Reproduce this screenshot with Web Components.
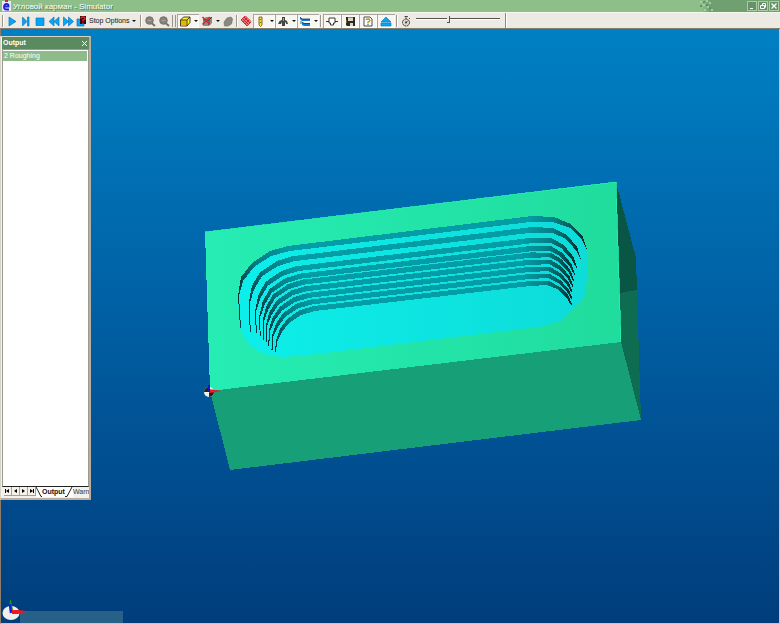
<!DOCTYPE html>
<html lang="en">
<head>
<meta charset="utf-8">
<title>Simulator</title>
<style>
html,body{margin:0;height:100%}
body{font:7px/10px "Liberation Sans",Arial,sans-serif;color:#111;overflow:hidden}
</style>
</head>
<body>
<sim-window></sim-window>
<script>
const define = (name, html, setup) => customElements.define(name, class extends HTMLElement {
  connectedCallback() {
    if (this.shadowRoot) return;
    const t = document.createElement('template');
    t.innerHTML = html;
    this.attachShadow({mode: 'open'}).append(t.content.cloneNode(true));
    if (setup) setup(this, this.shadowRoot);
  }
});

/* 12 x 12 glyphs for the toolbar */
const blue = 'fill="#08a5f4" stroke="#0878c4" stroke-width=".7"';
const ICONS = {
  play: `<path ${blue} d="M3 2L10 6.500L3 11Z"/>`,
  step: `<path ${blue} d="M2.500 2L7 6.500L2.500 11ZM7.500 2H9V11H7.500Z"/>`,
  stop: `<path ${blue} d="M2 3H10V10.500H2Z"/>`,
  back: `<path ${blue} d="M6 2V11L1 6.500ZM11 2V11L6 6.500Z"/>`,
  forward: `<path ${blue} d="M1.500 2L6.500 6.500L1.500 11ZM6.500 2L11.500 6.500L6.500 11Z"/>`,
  ask: `<path ${blue} d="M1 4H8V11H1Z"/><path fill="#320b12" d="M4 1H10V9H4Z"/><path fill="none" stroke="#f01c20" stroke-width="1.500" d="M5 3.500Q5 2 7 2Q9 2 9 3.500Q9 4.500 7 5V6.500M7 7.500V9"/>`,
  zoom: `<path stroke="#77716a" stroke-width="2" d="M7.500 8L11 11"/><circle cx="5.500" cy="5.500" r="3.800" fill="#85817b" stroke="#77726c"/><path stroke="#aaa69f" d="M3.500 5.500H7.500"/>`,
  cube: `<path fill="#ffed2d" stroke="#261d00" stroke-width=".8" d="M1.500 5L4.500 2H11V7.500L8 11H1.500Z"/><path fill="#e8b600" d="M2 5.500H7.500V10.500H2Z"/><path fill="none" stroke="#261d00" stroke-width=".8" d="M1.500 5H8L11 2M8 5V11"/>`,
  cross: `<path fill="#8f8c86" d="M2 4L5 2H11V8L8 11H2Z"/><path stroke="#333" stroke-width=".8" d="M2 5H8L11 2M8 5V10"/><path stroke="#df242a" stroke-width="1.600" d="M1.500 2L9 9.500M9 2L1.500 9.500"/>`,
  blob: `<path fill="#8b8781" stroke="#77736e" stroke-width=".7" d="M2 7L5 3L9 2L10.500 4L9.500 9L6 11H2.500Z"/>`,
  mesh: `<path fill="#e07874" d="M1 5L5 1L11 7L7 11Z"/><path stroke="#c72330" stroke-width=".9" d="M1 5L7 11M2.500 3.500L8.500 9.500M4 2L10 8M5.500 1L11 6.500M5 1L1 5M7 3L3 7M9 5L5 9M11 7L7 11"/>`,
  tool: `<path fill="#ffe735" stroke="#684b00" stroke-width=".8" d="M4 2H7V10L5.500 11.500L4 10Z"/><path stroke="#8d6900" d="M4.500 5L6.500 4M4.500 8L6.500 7"/>`,
  holder: `<path fill="#424741" d="M5 2H8V5L10 6L11 9H9V8L8 7V11H5V7L4 9H1L2.500 6L5 5Z"/><path stroke="#97a59b" d="M6.500 3V6"/>`,
  path: `<path fill="#137bd5" d="M1 2L3 4H11V6H3L1 4ZM3 7L5 8H11V11H5L3 10Z"/><path fill="none" stroke="#173a5b" stroke-width=".8" d="M1 2L3 4H11M3 7L5 8.500H11M2 6V9"/>`,
  plug: `<path fill="#fff" stroke="#222" stroke-width=".9" d="M0 6.500H3V3H9V6.500H12M9 6.500V8H7.500V10H4.500V8H3V6.500"/>`,
  save: `<path fill="#2a2926" d="M2 2H11V11H3L2 10Z"/><path fill="#d9d6cb" d="M4 2.500H9V6H4ZM6 8H9V11H6Z"/><path fill="#7e642b" d="M2 5H3V8H2Z"/>`,
  help: `<path fill="#fff" stroke="#222" stroke-width=".8" d="M2 2H8L10 4V11H2Z"/><path fill="none" stroke="#b29300" stroke-width="1.300" d="M4 5Q4 4 6 4Q8 4 8 5.500Q8 6.500 6 7V8.500"/><path stroke="#3052a2" d="M6 9V10.500"/>`,
  eject: `<path ${blue} d="M6 2L11 7H1ZM1 8H11V11H1Z"/>`,
  gauge: `<circle cx="6" cy="7.500" r="3.500" fill="#dcd8cd" stroke="#37342f" stroke-dasharray="2 .5"/><circle cx="6" cy="7.500" r="1" fill="#37342f"/><path fill="none" stroke="#37342f" stroke-width=".8" d="M6 1V4M4.500 1.500H8M9 4L10 3M6 7.500L8 5.500"/>`
};

define('tool-icon', `<style>:host{display:block;width:12px;height:12px;flex:none}svg{display:block}</style><svg viewBox="0 0 12 12" width="12" height="12" fill="none" aria-hidden="true"></svg>`,
  (el, root) => { root.querySelector('svg').innerHTML = ICONS[el.getAttribute('name')]; });

define('tool-button', `<style>
:host{display:block;flex:none;width:14px;height:14px}
:host([wide]){width:18px}:host([menu]){width:22px}:host([labelled]){width:64px}
button{all:unset;box-sizing:border-box;display:flex;align-items:center;justify-content:center;width:100%;height:14px;white-space:nowrap;gap:1px}
:host([menu]) button{gap:3px}
:host([labelled]) button{justify-content:flex-start;padding-left:1px}
:host([on]) button{background:#f7f6f1;box-shadow:inset 1px 1px #aaa69b,inset -1px -1px #fff}
i{display:none;border:2px solid transparent;border-top-color:#111;border-bottom:0}
:host([menu]) i,:host([labelled]) i{display:block}
:host([labelled]) i{margin-left:2px}
</style><button type="button"><tool-icon></tool-icon><slot></slot><i></i></button>`,
  (el, root) => {
    root.querySelector('button').setAttribute('aria-label', el.getAttribute('label'));
    const icon = document.createElement('tool-icon');
    icon.setAttribute('name', el.getAttribute('icon'));
    root.querySelector('tool-icon').replaceWith(icon);
  });

define('tool-sep', `<style>:host{display:block;flex:none;width:4px;height:12px;background:linear-gradient(#9b968a,#9b968a) 1px 0/1px 100% no-repeat,linear-gradient(#fff,#fff) 2px 0/1px 100% no-repeat}
:host([double]){width:6px;background:linear-gradient(#9b968a,#9b968a) 1px 0/1px 100% no-repeat,linear-gradient(#9b968a,#9b968a) 4px 0/1px 100% no-repeat}</style>`);

define('tool-bar', `<style>
:host{display:flex;height:16px;background:#eceae3;border-bottom:1px solid #827d70;box-sizing:border-box}
.band{display:flex;align-items:center;padding-left:1px;border-right:1px solid #8f8a7f;box-shadow:1px 0 #fff}
input{appearance:none;width:84px;height:12px;margin:0 5px 3px 3px;background:linear-gradient(#55534d,#55534d) 0 5px/100% 1px no-repeat,linear-gradient(#fff,#fff) 0 6px/100% 1px no-repeat;outline:0}
input::-webkit-slider-thumb{appearance:none;width:3px;height:7px;background:#eceae3;border:solid #55534d;border-width:0 1px 1px 0;box-sizing:border-box}
</style><div class="band"><tool-sep></tool-sep>
<tool-button icon="play" label="Play"></tool-button><tool-button icon="step" label="Step"></tool-button><tool-button icon="stop" label="Stop"></tool-button><tool-button icon="back" label="Rewind"></tool-button><tool-button icon="forward" label="Fast forward"></tool-button>
<tool-button icon="ask" label="Stop Options" labelled>Stop Options</tool-button><tool-sep></tool-sep>
<tool-button icon="zoom" label="Zoom in"></tool-button><tool-button icon="zoom" label="Zoom out"></tool-button><tool-sep double></tool-sep>
<tool-button icon="cube" label="Stock" menu on></tool-button><tool-button icon="cross" label="Hide" menu></tool-button><tool-button icon="blob" label="Part"></tool-button><tool-sep></tool-sep>
<tool-button icon="mesh" label="Mesh"></tool-button><tool-button icon="tool" label="Tool" menu on></tool-button><tool-button icon="holder" label="Holder" menu on></tool-button><tool-button icon="path" label="Path" menu on></tool-button><tool-sep></tool-sep>
<tool-button icon="plug" label="Connect" wide on></tool-button><tool-button icon="save" label="Save" wide on></tool-button><tool-button icon="help" label="Help" wide on></tool-button><tool-button icon="eject" label="Eject" wide on></tool-button><tool-sep></tool-sep>
<tool-button icon="gauge" label="Speed"></tool-button><input type="range" aria-label="Simulation speed" min="0" max="100" value="38"></div>`);

define('title-bar', `<style>
:host{display:flex;align-items:center;height:13px;padding:0 1px 0 2px;box-sizing:border-box;color:#fff;font-size:8px;background:linear-gradient(90deg,#8fbf89 0 90%,#70a070 91%);border-bottom:1px solid #f5f8ef}
.logo{margin-right:2px;flex:none}span{flex:1;padding-top:1px;text-shadow:1px 1px #557d55}
.pix{flex:none;margin-right:29px}
button{all:unset;box-sizing:border-box;width:10px;height:10px;border:1px solid #a9cda3;margin-left:1px;background:#669267}
button svg{display:block}
</style><svg class="logo" width="9" height="12" viewBox="0 0 9 12"><path fill="#e8eafb" d="M0 1H9V11H0Z"/><path fill="#e01f31" d="M3 0H6V2H3Z"/><path fill="none" stroke="#2222d4" stroke-width="1.800" d="M2 6.500H6.500Q7 4 4.500 4Q2 4 2 7Q2 9.500 4.500 9.500H7"/></svg><span>Угловой карман - Simulator</span>
<svg class="pix" width="18" height="12" viewBox="0 0 18 12"><path fill="#8fbf89" d="M0 0H4V12H2V8H0Z"/><path fill="#a3cda0" d="M1 1H3V3H1ZM7 0H9V2H7ZM4 4H6V6H4ZM10 2H12V4H10ZM8 6H10V8H8ZM5 9H7V11H5ZM12 9H14V11H12Z"/><path fill="#638f64" d="M4 1H6V3H4ZM1 5H3V7H1ZM7 4H9V6H7ZM10 7H12V9H10Z"/></svg>
<button aria-label="Minimize"><svg width="8" height="8"><path stroke="#fff" stroke-width="1" d="M2 6.500H5"/></svg></button><button aria-label="Restore"><svg width="8" height="8"><path fill="none" stroke="#fff" d="M1.500 3.500H5.500V6.500H1.500ZM3.500 3V1.500H6.500V5.500"/></svg></button><button aria-label="Close"><svg width="8" height="8"><path stroke="#fff" stroke-width="1.400" d="M1.500 1.500L6.500 6.500M6.500 1.500L1.500 6.500"/></svg></button>`);

define('output-panel', `<style>
:host{display:flex;flex-direction:column;box-sizing:border-box;background:#f3f1e9;border:1px solid #d8d5c8;border-right:2px solid #b8ada0;border-bottom:2px solid #b8ada0;padding:0 0 1px 1px}
header{display:flex;align-items:center;justify-content:space-between;height:12px;flex:none;background:#5b8a60;color:#fff;font-weight:bold;padding:0 1px 0 1px}
header button{all:unset;width:7px;height:7px}header svg,nav svg{display:block}
ul{flex:1;list-style:none;margin:0;padding:1px 1px 1px 0;background:#fff;border:1px solid #999b91;border-bottom-color:#222}
li{background:#8fba8a;color:#fff;padding-left:1px;height:10px}
nav{display:flex;height:10px;flex:none;overflow:hidden;padding-left:2px}
nav button{all:unset;box-sizing:border-box;flex:none;width:8px;height:9px;border:solid #a5a197;border-width:0 1px 1px 0;background:#f5f3ec}
nav .tab{width:auto;height:10px;border:0;display:flex;background:none;color:#333}
nav .tab.on{color:#111;background:#fff;font-weight:bold}
</style><header>Output<button aria-label="Close"><svg width="7" height="7"><path stroke="#fff" d="M1 1L6 6M6 1L1 6"/></svg></button></header>
<ul><li>2 Roughing</li></ul>
<nav><button aria-label="First"><svg width="7" height="8"><path d="M1 2H2V6H1ZM5 2V6L2 4Z"/></svg></button><button aria-label="Previous"><svg width="7" height="8"><path d="M5 2V6L2 4Z"/></svg></button><button aria-label="Next"><svg width="7" height="8"><path d="M2 2V6L5 4Z"/></svg></button><button aria-label="Last"><svg width="7" height="8"><path d="M2 2V6L5 4ZM5 2H6V6H5Z"/></svg></button><button class="tab on"><svg width="6" height="10"><path fill="none" stroke="#222" d="M0 0L5 9.500H6"/></svg>Output<svg width="8" height="10"><path fill="none" stroke="#222" d="M0 9.500H2L7 0"/></svg></button><button class="tab">Warn</button></nav>`);

/* Milled block: nested pocket terraces blend from the top rim to the floor */
define('stock-scene', `<style>:host{display:block}svg{display:block;width:100%;height:100%}</style>
<svg viewBox="1 29 778 594" preserveAspectRatio="xMidYMid slice" shape-rendering="crispEdges" role="img" aria-label="Milled block with stepped pocket">
<defs><linearGradient id="sky" x2="0" y2="1"><stop stop-color="#0080c4"/><stop offset=".5" stop-color="#005ea2"/><stop offset="1" stop-color="#003d7c"/></linearGradient>
<linearGradient id="top"><stop stop-color="#26edb4"/><stop offset="1" stop-color="#20dc9d"/></linearGradient>
<linearGradient id="floor"><stop stop-color="#0deeea"/><stop offset="1" stop-color="#0ddcd9"/></linearGradient>
<linearGradient id="wall"><stop stop-color="#042d34"/><stop offset=".012" stop-color="#064d56"/><stop offset=".05" stop-color="#047b84"/><stop offset=".15" stop-color="#049da6"/><stop offset=".83" stop-color="#049da6"/><stop offset=".91" stop-color="#077f86"/><stop offset=".96" stop-color="#065558"/><stop offset="1" stop-color="#022326"/></linearGradient></defs>
<path fill="url(#sky)" d="M-800 29H1600V624H-800Z"/>
<path fill="#095645" d="M616 182L636 258L641 420L621 342Z"/><path fill="#0e6c51" d="M620 293L637 290L641 420L621 342Z"/>
<path fill="#17a077" d="M210 391L621 342L641 420L230 470Z"/>
<path fill="url(#top)" d="M205 232L616 182L621 342L210 391Z"/>
<path fill="none" stroke="#25f0ae" stroke-width=".8" d="M205 232L616 182L621 342"/>
<path fill="url(#floor)" d="M240 327L238 300L241 278L252 263L270 251L288 246L532 216L554 217L571 224L583 237L587 250V280L584 298L573 310L560 321L545 326L530 328L300 356L280 357L265 354L250 346L241 331Z"/>
<g id="steps" fill="url(#wall)"/>
<g shape-rendering="auto"><circle cx="209" cy="392" r="5" fill="#f4f4ee"/><path fill="#29201e" d="M209 392V387A5 5 0 0 0 204 392ZM209 392V397A5 5 0 0 0 214 392Z"/><path fill="#f21b20" d="M209 389L222 391L209 393Z"/><path stroke="#0b13c8" stroke-width="2" d="M209 392V385"/></g>
</svg>`, (el, root) => {
  const o1 = [[240,328],[238,296],[241,277],[252,263],[270,251],[288,246],[532,216],[554,217],[571,224],[583,237],[587,250]];
  const i1 = [[241,328],[239,296],[243,281],[254,267],[271,256],[290,251],[530,222],[553,222],[570,228],[582,240],[587,250]];
  const o9 = [[275,352],[276,340],[280,329],[287,319],[300,310],[314,306],[530,281],[549,281],[560,287],[568,295],[572,304]];
  const i9 = [[276,352],[277,342],[282,332],[289,323],[301,315],[315,311],[530,286],[547,285],[557,289],[566,297],[571,305]];
  const mid = [0,.17,.335,.46,.56,.67,.78,.89,1], left = [0,.28,.45,.56,.65,.73,.81,.9,1];
  const foot = [0,.17,.22,.32,.5,.6,.77,.9,1], right = [0,.4,.65,.78,.86,.91,.95,.98,1];
  const mix = (a, b, k) => a.map((p, n) => {
    const tx = n < 3 ? left[k] : n < 5 ? (left[k] + mid[k]) / 2 : n < 8 ? mid[k] : right[k], ty = n < 1 ? foot[k] : mid[k];
    return [p[0] + (b[n][0] - p[0]) * tx, p[1] + (b[n][1] - p[1]) * ty].join(' ');
  });
  root.querySelector('#steps').innerHTML = mid.map((_, k) => `<path d="M${mix(o1, o9, k).join('L')}L${mix(i1, i9, k).reverse().join('L')}Z"/>`).join('');
});

define('axis-strip', `<style>:host{display:flex;align-items:flex-end}svg{display:block;position:relative;z-index:1}div{width:103px;height:12px;background:#286187;margin-left:-6px}</style>
<svg width="25" height="23" viewBox="0 0 25 23"><ellipse cx="10" cy="13" rx="8.500" ry="7" fill="#efefed"/><path fill="#08a51a" d="M8 7L9 0H10L12 10H9Z"/><path stroke="#1720e8" stroke-width="2.500" d="M10 13L9 4"/><path fill="#f01820" d="M11 10H17L25 11V12L17 14H11Z"/></svg><div></div>`);

define('sim-window', `<style>
:host{display:flex;flex-direction:column;height:100vh;box-sizing:border-box}
main{flex:1;min-height:0;position:relative;border:1px solid #8f7b67;border-top:0;border-right-color:#c9c7bc;border-bottom-color:#c9c7bc}
stock-scene{position:absolute;inset:0}
output-panel{position:absolute;left:-1px;top:7px;width:91px;height:464px}
axis-strip{position:absolute;left:0;bottom:0}
</style><title-bar></title-bar><tool-bar></tool-bar><main><stock-scene></stock-scene><output-panel></output-panel><axis-strip></axis-strip></main>`);
</script>
</body>
</html>
